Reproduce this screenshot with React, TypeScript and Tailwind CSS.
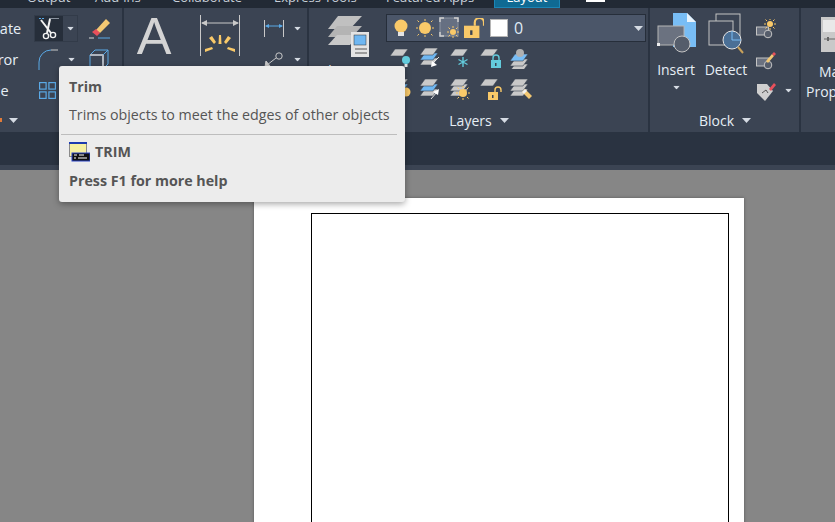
const Caret = ({ className = "" }: { className?: string }) => (
  <svg width="9" height="5" viewBox="0 0 9 5" className={`shrink-0 ${className}`}>
    <polygon points="0,0 9,0 4.5,5" fill="#d5dbe3" />
  </svg>
);

const Plane = ({ x = 0, y = 0, fill = "#c9c9c9" }: { x?: number; y?: number; fill?: string }) => (
  <polygon points={`${x + 5},${y} ${x + 18},${y} ${x + 13},${y + 7} ${x},${y + 7}`} fill={fill} stroke="#3b4453" strokeWidth="0.6" />
);

const Stack = ({ y = 0, mid = "#6fb7f2", top = "#c9c9c9", bottom = "#c9c9c9" }: { y?: number; mid?: string; top?: string; bottom?: string }) => (
  <>
    <Plane y={y + 10} fill={bottom} />
    <Plane y={y + 5} fill={mid} />
    <Plane y={y} fill={top} />
  </>
);

const Sun = ({ cx, cy, r = 4 }: { cx: number; cy: number; r?: number }) => (
  <g stroke="#f9c969" strokeWidth="1">
    <circle cx={cx} cy={cy} r={r} fill="#f9c969" stroke="none" />
    <path d={`M${cx} ${cy - r - 3}v2M${cx} ${cy + r + 1}v2M${cx - r - 3} ${cy}h2M${cx + r + 1} ${cy}h2M${cx - r - 1.5} ${cy - r - 1.5}l1.5 1.5M${cx + r} ${cy + r}l1.5 1.5M${cx + r + 1.5} ${cy - r - 1.5}l-1.5 1.5M${cx - r} ${cy + r}l-1.5 1.5`} />
  </g>
);

const Lock = ({ x, y, fill = "#f9c969", open = true }: { x: number; y: number; fill?: string; open?: boolean }) => (
  <g>
    <path
      d={open ? `M${x + 7} ${y + 5}v-2a3 3 0 0 1 6 0v2` : `M${x + 2} ${y + 5}v-2a3 3 0 0 1 6 0v2`}
      fill="none"
      stroke={fill}
      strokeWidth="1.4"
    />
    <rect x={x} y={y + 5} width="10" height="8" fill={fill} />
    <rect x={x + 4} y={y + 8} width="1.5" height="3" fill="#3b4453" />
  </g>
);

const Bulb = ({ x, y, fill }: { x: number; y: number; fill: string }) => (
  <g>
    <circle cx={x} cy={y} r="6.5" fill={fill} />
    <rect x={x - 3} y={y + 6} width="6" height="4" fill="#e4e4e4" />
  </g>
);

const TrimIcon = () => (
  <svg width="20" height="24" viewBox="0 0 20 24">
    <path d="M0 1.5h6" stroke="#5aa9e6" strokeWidth="1" strokeDasharray="2 1" />
    <path d="M10 1.5h10" stroke="#8a929e" strokeWidth="1" />
    <path d="M2 3l10 13M11 2l-3 14" stroke="#f2f2f2" strokeWidth="2" />
    <circle cx="7" cy="19" r="2.6" fill="none" stroke="#f2f2f2" strokeWidth="1.4" />
    <circle cx="14" cy="18" r="2.6" fill="none" stroke="#f2f2f2" strokeWidth="1.4" />
  </svg>
);

const EraserIcon = () => (
  <svg width="22" height="22" viewBox="0 0 22 22">
    <path d="M7 12L17 1l4 4-10 10z" fill="#f3c873" />
    <path d="M3 14l4-3 4 4-3 3z" fill="#e8505b" />
    <path d="M0 20h5" stroke="#d8d8d8" />
    <path d="M9 20h12" stroke="#5aa9e6" />
  </svg>
);

const FilletIcon = () => (
  <svg width="21" height="21" viewBox="0 0 21 21">
    <path d="M1 21v-8A12 12 0 0 1 13 1" fill="none" stroke="#5aa9e6" strokeWidth="1" />
    <path d="M13 1h7" stroke="#c9c9c9" />
  </svg>
);

const CubeIcon = () => (
  <svg width="20" height="21" viewBox="0 0 20 21">
    <path d="M1 6l5-5h13v14l-5 5H1z" fill="none" stroke="#5aa9e6" />
    <path d="M1 6h13v14" fill="none" stroke="#aeb5bf" strokeWidth="2" />
    <path d="M14 6l5-5" stroke="#5aa9e6" />
  </svg>
);

const ArrayIcon = () => (
  <svg width="17" height="17" viewBox="0 0 17 17" fill="none" stroke="#5aa9e6" strokeWidth="1.2">
    <rect x="0.6" y="0.6" width="6.5" height="6.5" />
    <rect x="9.9" y="0.6" width="6.5" height="6.5" />
    <rect x="0.6" y="9.9" width="6.5" height="6.5" />
    <rect x="9.9" y="9.9" width="6.5" height="6.5" />
  </svg>
);

const DimensionIcon = () => (
  <svg width="40" height="41" viewBox="0 0 40 41">
    <path d="M0.5 0v41M39.5 0v41" stroke="#c9c9c9" />
    <path d="M2 8h36" stroke="#c9c9c9" />
    <path d="M1 8l6-3v6zM39 8l-6-3v6z" fill="#c9c9c9" />
    <g fill="#f9c969">
      <polygon points="19,20 21,20 21.5,29 18.5,29" />
      <polygon points="9,23 12,21 16,27 14,29" />
      <polygon points="31,23 28,21 24,27 26,29" />
      <polygon points="5,34 12,32 13,34 5,37" />
      <polygon points="35,34 28,32 27,34 35,37" />
    </g>
  </svg>
);

const LinearDimIcon = () => (
  <svg width="20" height="18" viewBox="0 0 20 18">
    <path d="M0.5 0v17M19.5 0v17" stroke="#c9c9c9" />
    <path d="M2 6h16" stroke="#5aa9e6" />
    <path d="M1 6l4-2v4zM19 6l-4-2v4z" fill="#5aa9e6" />
  </svg>
);

const LeaderIcon = () => (
  <svg width="20" height="16" viewBox="0 0 20 16" fill="none" stroke="#c9c9c9">
    <circle cx="15" cy="4" r="3.2" />
    <path d="M12 6L3 13" />
    <path d="M1 15l1-6 4 5z" fill="#c9c9c9" />
  </svg>
);

const LayerPropsIcon = () => (
  <svg width="41" height="42" viewBox="0 0 41 42">
    <polygon points="10,1 34,1 22,14 0,14" fill="#c0c0c0" />
    <polygon points="9,11 34,11 24,22 0,22" fill="#b4b4b4" />
    <polygon points="9,20 30,20 22,30 0,30" fill="#c9c9c9" />
    <rect x="23" y="17" width="18" height="25" fill="#e4e4e4" />
    <rect x="26" y="20" width="12" height="10" fill="#6fb7f2" stroke="#333" strokeWidth="0.5" />
    <path d="M27 34h12M27 38h12" stroke="#555" />
  </svg>
);

const InsertIcon = () => (
  <svg width="40" height="42" viewBox="0 0 40 42">
    <path d="M16 0h14l9 9v25H16z" fill="#78bdf5" />
    <path d="M30 0l9 9h-9z" fill="#e9f3fb" />
    <rect x="1" y="13" width="26" height="19" fill="#6b7280" stroke="#b5b5b5" />
    <circle cx="25" cy="31" r="8" fill="#555d6b" stroke="#c4c4c4" />
    <rect x="0" y="30" width="3" height="3" fill="#eee" />
  </svg>
);

const DetectIcon = () => (
  <svg width="37" height="41" viewBox="0 0 37 41" fill="none">
    <rect x="8" y="1" width="24" height="24" stroke="#c4c4c4" />
    <rect x="1" y="8" width="24" height="24" fill="#3f4757" stroke="#c4c4c4" />
    <circle cx="24" cy="27" r="9" fill="#4a6f96" stroke="#e5e5e5" />
    <path d="M24 18v9h9" stroke="#78bdf5" />
    <path d="M30 34l5 6" stroke="#c8a15b" strokeWidth="2" />
  </svg>
);

const BlockSmallIcon = ({ kind }: { kind: "star" | "pencil" }) => (
  <svg width="20" height="20" viewBox="0 0 20 20" fill="none">
    <rect x="0.5" y="8" width="12" height="8" fill="#6b7280" stroke="#c4c4c4" />
    <circle cx="12" cy="15" r="3.8" fill="#555d6b" stroke="#c4c4c4" />
    {kind === "star" ? (
      <Sun cx={14} cy={5} r={3} />
    ) : (
      <>
        <path d="M10 11l6-7 2 2-6 7z" fill="#f3c873" />
        <path d="M16 4l2-2 2 2-2 2z" fill="#e8505b" />
      </>
    )}
  </svg>
);

const TagIcon = () => (
  <svg width="20" height="20" viewBox="0 0 20 20">
    <path d="M1 3h10l6 7-8 10-8-8z" fill="#cfcfcf" />
    <path d="M6 12l4-3 2 3" fill="none" stroke="#555" />
    <path d="M13 8l5-6 2 2-5 6z" fill="#e8505b" />
  </svg>
);

const MatchIcon = () => (
  <svg width="14" height="35" viewBox="0 0 14 35">
    <rect width="14" height="35" fill="#c9c9c9" />
    <rect x="2" y="3" width="12" height="12" fill="#e9e9e9" />
    <path d="M3 22h11" stroke="#666" />
    <rect x="6" y="20" width="2" height="4" fill="#666" />
  </svg>
);

const CmdIcon = () => (
  <svg width="21" height="20" viewBox="0 0 21 20" className="shrink-0">
    <rect x="0.5" y="0.5" width="17" height="14" fill="#f6f0a0" stroke="#8a8a8a" />
    <rect x="0" y="0" width="18" height="2" fill="#1d3bb0" />
    <rect x="3" y="11" width="18" height="8" fill="#111" stroke="#2a44c8" />
    <path d="M5 13h3M10 13h5M5 16h2M9 16h9" stroke="#fff" />
  </svg>
);

const layerIcons = [
  <svg key="a" width="24" height="22" viewBox="0 0 24 22" className="overflow-visible">
    <Plane y={2} />
    <circle cx="16" cy="13" r="4" fill="#63cbdc" />
    <rect x="14.5" y="17" width="3" height="3" fill="#e4e4e4" />
  </svg>,
  <svg key="b" width="24" height="22" viewBox="0 0 24 22">
    <Stack y={1} />
    <path d="M19 10l-7 7" stroke="#e4e4e4" />
    <path d="M11 20l1-6 5 4z" fill="#fff" />
  </svg>,
  <svg key="c" width="24" height="22" viewBox="0 0 24 22">
    <Plane y={2} />
    <path d="M13 10v10M8.5 12.5l9 5M17.5 12.5l-9 5" stroke="#63cbdc" strokeWidth="1.4" />
  </svg>,
  <svg key="d" width="24" height="22" viewBox="0 0 24 22">
    <Plane y={2} />
    <Lock x={11} y={8} fill="#63cbdc" open={false} />
  </svg>,
  <svg key="e" width="24" height="22" viewBox="0 0 24 22">
    <Stack y={7} top="#78bdf5" mid="#c9c9c9" />
    <circle cx="10" cy="6" r="4" fill="#b0b0b0" />
  </svg>,
];

const layerIcons2 = [
  <svg key="a" width="24" height="22" viewBox="0 0 24 22" className="overflow-visible">
    <Stack y={1} />
    <circle cx="16" cy="14" r="4.5" fill="#f9c969" />
  </svg>,
  <svg key="b" width="24" height="22" viewBox="0 0 24 22">
    <Stack y={1} />
    <path d="M11 21l6-7" stroke="#e4e4e4" />
    <path d="M19 11l-1 6-5-3z" fill="#fff" />
  </svg>,
  <svg key="c" width="24" height="22" viewBox="0 0 24 22">
    <Stack y={1} mid="#c9c9c9" />
    <Sun cx={13} cy={15} r={4} />
  </svg>,
  <svg key="d" width="24" height="22" viewBox="0 0 24 22">
    <Plane y={1} />
    <Lock x={8} y={9} />
  </svg>,
  <svg key="e" width="24" height="22" viewBox="0 0 24 22">
    <Stack y={1} mid="#c9c9c9" />
    <path d="M12 14l3-3 7 7-3 3z" fill="#f3c873" />
    <path d="M12 14l3-3 2 2-3 3z" fill="#f2f2f2" />
  </svg>,
];

const PanelTitle = ({ title, className = "" }: { title: string; className?: string }) => (
  <div className={`h-[24px] flex items-center gap-[8px] text-[14px] text-[#e6eef5] ${className}`}>
    <span>{title}</span>
    <Caret className="mt-[1px]" />
  </div>
);

const Row = ({ children, className = "" }: { children: React.ReactNode; className?: string }) => (
  <div className={`h-[31px] flex items-center ${className}`}>{children}</div>
);

export default function App() {
  return (
    <div
      className="relative w-[835px] h-[522px] overflow-hidden flex flex-col bg-[#868686]"
      style={{ fontFamily: '"Open Sans", "Noto Sans", sans-serif' }}
    >
      {/* tab strip, cut by the top of the window */}
      <div className="h-[8px] shrink-0 bg-[#222a35] flex items-end overflow-hidden pl-[27px] text-[13px] leading-[16px] text-[#c9d1da]">
        <span className="w-[68px] shrink-0 mb-[3px]">Output</span>
        <span className="w-[77px] shrink-0 mb-[3px]">Add-ins</span>
        <span className="w-[102px] shrink-0 mb-[3px]">Collaborate</span>
        <span className="w-[112px] shrink-0 mb-[3px]">Express Tools</span>
        <span className="w-[108px] shrink-0 mb-[3px]">Featured Apps</span>
        <div className="w-[66px] h-[8px] shrink-0 bg-[#0f6a93] border-x border-b border-[#1b85b5] flex justify-center overflow-hidden text-white">
          <span className="mt-[-11px] h-[16px]">Layout</span>
        </div>
        <div className="ml-[26px] w-[19px] h-[2px] bg-white self-start" />
      </div>

      {/* ribbon */}
      <div className="h-[124px] shrink-0 bg-[#3b4453] flex overflow-hidden text-[#e6eef5]">
        {/* Modify */}
        <div className="w-[124px] shrink-0 border-r-2 border-[#2a3341] flex flex-col">
          <div className="pt-[5px] flex-1 flex">
            <div className="w-[33px] shrink-0 flex flex-col text-[14.5px] whitespace-nowrap">
              <Row><span className="ml-[-23px]">Rotate</span></Row>
              <Row><span className="ml-[-25px]">Mirror</span></Row>
              <Row><span className="ml-[-26px]">Scale</span></Row>
            </div>
            <div className="w-[56px] flex flex-col">
              <Row>
                <div className="ml-[1px] w-[44px] h-[27px] flex bg-[#262e3a] border border-[#323b49]">
                  <div className="w-[28px] flex items-center justify-center"><TrimIcon /></div>
                  <div className="flex-1 bg-[#3b4453] flex items-center justify-center"><Caret className="scale-75" /></div>
                </div>
              </Row>
              <Row className="pl-[5px] gap-[8px]">
                <FilletIcon />
                <Caret className="scale-75" />
              </Row>
              <Row className="pl-[6px]"><ArrayIcon /></Row>
            </div>
            <div className="flex flex-col">
              <Row><EraserIcon /></Row>
              <Row><CubeIcon /></Row>
            </div>
          </div>
          <div className="h-[24px] flex items-center gap-[7px]">
            <div className="w-[2px] h-[4px] bg-[#e07b39]" />
            <Caret />
          </div>
        </div>

        {/* Annotation */}
        <div className="w-[185px] shrink-0 border-r-2 border-[#2a3341] pt-[5px] flex">
          <div className="w-[62px] flex flex-col items-center">
            <span className="text-[52px] leading-[46px] text-[#d4d4d4] ml-[-2px]" style={{ fontFamily: '"Liberation Sans", sans-serif' }}>A</span>
            <span className="text-[14px] text-center mt-[1px]">Text</span>
          </div>
          <div className="w-[78px] flex flex-col items-center pt-[2px]">
            <div className="ml-[-10px]"><DimensionIcon /></div>
            <span className="text-[14px] mt-[4px]">Dimension</span>
          </div>
          <div className="flex flex-col">
            <Row className="gap-[9px]"><LinearDimIcon /><Caret className="scale-75" /></Row>
            <Row className="gap-[9px]"><LeaderIcon /><Caret className="scale-75" /></Row>
          </div>
        </div>

        {/* Layers */}
        <div className="w-[341px] shrink-0 border-r-2 border-[#2a3341] flex flex-col">
          <div className="flex-1 flex pt-[6px]">
            <div className="w-[77px] pl-[19px] pt-[1px] flex flex-col">
              <LayerPropsIcon />
              <span className="text-[14px] mt-[2px]">Layer</span>
            </div>
            <div className="flex flex-col">
              <div className="w-[260px] h-[28px] bg-[#4b5669] border border-[#262e3a] flex items-center">
                <svg width="14" height="20" viewBox="0 0 14 20" className="ml-[7px]"><Bulb x={7} y={8} fill="#f9c969" /></svg>
                <svg width="20" height="20" viewBox="0 0 20 20" className="ml-[7px]"><Sun cx={10} cy={10} r={6} /></svg>
                <svg width="22" height="22" viewBox="0 0 22 22" className="ml-[4px]">
                  <rect x="1" y="1" width="18" height="18" fill="#667082" stroke="#8b93a1" />
                  <path d="M1 5V1h4M15 1h4v4M1 15v4h4" fill="none" stroke="#d0d0d0" strokeWidth="1.5" />
                  <Sun cx={14} cy={15} r={3} />
                </svg>
                <svg width="20" height="20" viewBox="0 0 13 13" className="ml-[3px]"><Lock x={0} y={0} /></svg>
                <div className="ml-[6px] w-[18px] h-[18px] bg-white border border-[#b5b5b5]" />
                <span className="ml-[6px] text-[16px] leading-none text-[#dfe9f5]">0</span>
                <Caret className="ml-auto mr-[2px]" />
              </div>
              <div className="mt-[5px] h-[22px] flex items-center pl-[4px]">
                {layerIcons.map((icon, i) => (
                  <div key={i} className="w-[30px]">{icon}</div>
                ))}
              </div>
              <div className="mt-[9px] h-[22px] flex items-center pl-[4px]">
                {layerIcons2.map((icon, i) => (
                  <div key={i} className="w-[30px]">{icon}</div>
                ))}
              </div>
            </div>
          </div>
          <PanelTitle title="Layers" className="justify-center ml-[1px]" />
        </div>

        {/* Block */}
        <div className="w-[151px] shrink-0 border-r-2 border-[#2a3341] flex flex-col">
          <div className="flex-1 flex pt-[5px]">
            <div className="w-[52px] flex flex-col items-center">
              <div className="ml-[1px]"><InsertIcon /></div>
              <span className="text-[14px] mt-[5px] leading-[20px]">Insert</span>
              <Caret className="scale-75 mt-[5px]" />
            </div>
            <div className="w-[53px] flex flex-col items-center">
              <div className="ml-[-4px]"><DetectIcon /></div>
              <span className="text-[14px] mt-[6px] leading-[20px] ml-[-5px]">Detect</span>
            </div>
            <div className="flex flex-col pl-[1px]">
              <Row><BlockSmallIcon kind="star" /></Row>
              <Row><BlockSmallIcon kind="pencil" /></Row>
              <Row className="gap-[8px]"><TagIcon /><Caret className="scale-75" /></Row>
            </div>
          </div>
          <PanelTitle title="Block" className="justify-center ml-[1px]" />
        </div>

        {/* Match Properties, cut by the right edge */}
        <div className="flex-1 overflow-hidden pt-[9px] flex flex-col">
          <div className="pl-[20px]"><MatchIcon /></div>
          <div className="text-[14px] leading-[20px] pl-[5px] mt-[10px] whitespace-nowrap">
            <div className="pl-[13px]">Match</div>
            <div>Properties</div>
          </div>
        </div>
      </div>

      {/* strip under the ribbon */}
      <div className="h-[33px] shrink-0 bg-[#2a3341]" />
      <div className="h-[5px] shrink-0 bg-[#3b4453]" />

      {/* drawing area */}
      <div className="flex-1 pt-[28px] pl-[254px] overflow-hidden">
        <div className="w-[490px] h-[400px] bg-white pt-[15px] pl-[57px] shadow-[0_0_3px_rgba(0,0,0,0.35)]">
          <div className="w-[418px] h-[380px] border border-black" />
        </div>
      </div>

      {/* tooltip */}
      <div className="absolute left-[59px] top-[66px] w-[346px] h-[136px] rounded-[3px] bg-[#ececec] text-[#555555] pl-[10px] pr-[8px] shadow-[0_2px_6px_rgba(0,0,0,0.35)] text-[14.25px]">
        <div className="font-bold leading-[20px] mt-[11px]">Trim</div>
        <div className="leading-[20px] mt-[8px] whitespace-nowrap">Trims objects to meet the edges of other objects</div>
        <div className="h-px bg-[#bdbdbd] mt-[9px] ml-[-8px]" />
        <div className="flex items-center gap-[5px] mt-[7px] h-[20px] font-bold">
          <CmdIcon />
          <span>TRIM</span>
        </div>
        <div className="font-bold leading-[20px] mt-[9px]">Press F1 for more help</div>
      </div>
    </div>
  );
}
